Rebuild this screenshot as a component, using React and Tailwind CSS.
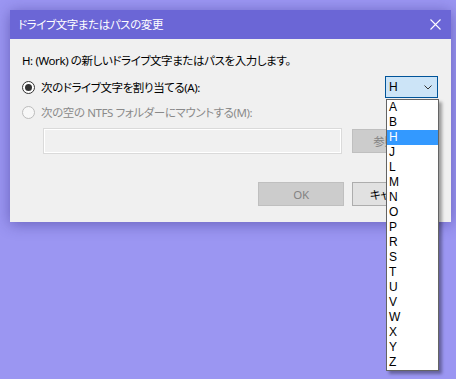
import React from 'react'

const letters = ['A', 'B', 'H', 'J', 'L', 'M', 'N', 'O', 'P', 'R', 'S', 'T', 'U', 'V', 'W', 'X', 'Y', 'Z']

const font = "font-['Noto_Sans','Noto_Sans_CJK_JP',sans-serif] [font-feature-settings:'palt']"

export default function App() {
  return (
    <div className={`relative w-[456px] h-[379px] bg-[#9b96f2] pt-[10px] pl-[10px] overflow-hidden ${font}`}>
      <div className="w-[441px] h-[212px] bg-[#f0f0f0] shadow-[0_2px_14px_rgba(40,30,120,0.45)] flex flex-col">
        {/* title bar */}
        <div className="h-[29px] bg-[#6b66d6] flex items-center justify-between pl-[8px] pr-[10px] text-white text-[11.5px] tracking-[-0.4px]">
          <span>ドライブ文字またはパスの変更</span>
          <svg width="11" height="11" viewBox="0 0 11 11">
            <path d="M0.5 0.5 L10.5 10.5 M10.5 0.5 L0.5 10.5" stroke="white" strokeWidth="1.1" />
          </svg>
        </div>

        <div className="pl-[12px] pr-[13px] pt-[14px] text-[11.5px] tracking-[-0.4px] text-black leading-[15px]">
          <p>H: (Work) の新しいドライブ文字またはパスを入力します。</p>

          <div className="mt-[8px] flex items-center justify-between">
            <div className="flex items-center gap-[6px]">
              <span className="w-[13px] h-[13px] rounded-full border border-[#333] bg-white flex items-center justify-center">
                <span className="w-[7px] h-[7px] rounded-full bg-[#333]" />
              </span>
              <span>次のドライブ文字を割り当てる(A):</span>
            </div>
            <div className="w-[53px] h-[22px] bg-[#cce4f7] border border-[#005499] flex items-center justify-between pl-[3px] pr-[5px] font-['Liberation_Sans',sans-serif] text-[12px] tracking-normal">
              <span>H</span>
              <svg width="8" height="5" viewBox="0 0 8 5">
                <path d="M0.5 0.5 L4 4 L7.5 0.5" stroke="#333" fill="none" strokeWidth="1" />
              </svg>
            </div>
          </div>

          <div className="mt-[7px] flex items-center gap-[6px] text-[#8a8a8a]">
            <span className="w-[13px] h-[13px] rounded-full border border-[#bcbcbc] bg-[#f7f7f7]" />
            <span>次の空の NTFS フォルダーにマウントする(M):</span>
          </div>

          <div className="mt-[8px] flex items-center justify-between pl-[21px]">
            <div className="w-[299px] h-[26px] border border-[#dadada] bg-[#f0f0f0] shadow-[inset_0_0_0_1px_#ffffff]" />
            <div className="w-[86px] h-[24px] bg-[#cccccc] border border-[#bfbfbf] flex items-center justify-center text-[#838383]">
              参照(B)...
            </div>
          </div>

          <div className="mt-[28px] flex justify-end gap-[8px]">
            <div className="w-[86px] h-[24px] bg-[#cccccc] border border-[#bfbfbf] flex items-center justify-center text-[#838383]">
              OK
            </div>
            <div className="w-[86px] h-[24px] bg-[#e1e1e1] border border-[#adadad] flex items-center justify-center">
              キャンセル
            </div>
          </div>
        </div>
      </div>

      {/* open dropdown list */}
      <div className="absolute left-[386px] top-[99px] w-[53px] bg-white border border-[#646464] shadow-[3px_3px_3px_rgba(0,0,0,0.35)] text-[12px] text-black flex flex-col font-['Liberation_Sans',sans-serif]">
        {letters.map(l => (
          <div key={l} className={`h-[15px] leading-[15px] pl-[2px] ${l === 'H' ? 'bg-[#3399ff] text-white' : ''}`}>
            {l}
          </div>
        ))}
      </div>
    </div>
  )
}
